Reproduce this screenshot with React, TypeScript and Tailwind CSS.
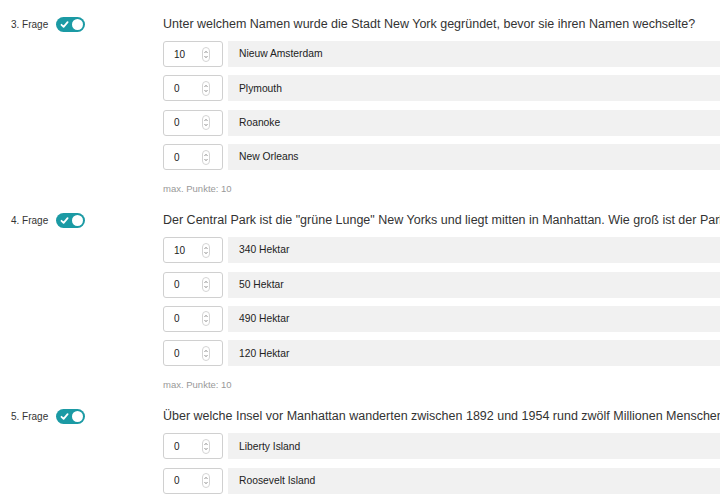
const questions = [
  {
    no: 3,
    text: 'Unter welchem Namen wurde die Stadt New York gegründet, bevor sie ihren Namen wechselte?',
    answers: [
      { points: 10, label: 'Nieuw Amsterdam' },
      { points: 0, label: 'Plymouth' },
      { points: 0, label: 'Roanoke' },
      { points: 0, label: 'New Orleans' },
    ],
  },
  {
    no: 4,
    text: 'Der Central Park ist die "grüne Lunge" New Yorks und liegt mitten in Manhattan. Wie groß ist der Park?',
    answers: [
      { points: 10, label: '340 Hektar' },
      { points: 0, label: '50 Hektar' },
      { points: 0, label: '490 Hektar' },
      { points: 0, label: '120 Hektar' },
    ],
  },
  {
    no: 5,
    text: 'Über welche Insel vor Manhattan wanderten zwischen 1892 und 1954 rund zwölf Millionen Menschen ein?',
    answers: [
      { points: 0, label: 'Liberty Island' },
      { points: 0, label: 'Roosevelt Island' },
    ],
  },
];

function Toggle() {
  return (
    <div className="relative w-[29px] h-[15px] rounded-full bg-[#1b9aa4]">
      <svg className="absolute left-[4px] top-[3px]" width="9" height="9" viewBox="0 0 9 9">
        <path d="M1.5 4.8 L3.6 6.8 L7.6 2.2" fill="none" stroke="white" strokeWidth="1.8" strokeLinecap="round" strokeLinejoin="round" />
      </svg>
      <div className="absolute right-[2px] top-[2px] w-[11px] h-[11px] rounded-full bg-white" />
    </div>
  );
}

function Spinner() {
  return (
    <svg width="8" height="15" viewBox="0 0 8 15">
      <rect x="0.5" y="0.5" width="7" height="14" rx="3.5" fill="white" stroke="#d4d4d4" />
      <path d="M2.5 6 L4 4.3 L5.5 6" fill="none" stroke="#888" strokeWidth="0.9" />
      <path d="M2.5 9 L4 10.7 L5.5 9" fill="none" stroke="#888" strokeWidth="0.9" />
    </svg>
  );
}

export default function App() {
  return (
    <div
      className="w-[720px] h-[500px] overflow-hidden bg-white text-[#333] pt-[14px]"
      style={{ fontFamily: '"Liberation Sans", Arial, sans-serif' }}
    >
      {questions.map((q) => (
        <div key={q.no} className="flex mb-[14px]">
          {/* Label + toggle */}
          <div className="w-[163px] shrink-0 pl-[11px]">
            <div className="h-[20px] flex items-center gap-[8px]">
              <span className="text-[10px] text-[#333]">{q.no}. Frage</span>
              <Toggle />
            </div>
          </div>

          {/* Question */}
          <div className="w-[640px] shrink-0">
            <div className="h-[20px] flex items-center text-[12.5px] whitespace-nowrap">{q.text}</div>
            <div className="mt-[7px] flex flex-col gap-[8.4px]">
              {q.answers.map((a) => (
                <div key={a.label} className="flex h-[26px] gap-[5px]">
                  <div className="w-[60px] shrink-0 flex items-center justify-between pl-[10px] pr-[12px] border border-[#d0d0d0] rounded-[3px] bg-white">
                    <span className="text-[10px] text-[#222]">{a.points}</span>
                    <Spinner />
                  </div>
                  <div className="flex-1 flex items-center pl-[11px] bg-[#f1f1f1] text-[10.3px] text-[#222]">
                    {a.label}
                  </div>
                </div>
              ))}
            </div>
            <div className="mt-[12px] h-[14px] flex items-center text-[9.5px] text-[#999]">max. Punkte: 10</div>
          </div>
        </div>
      ))}
    </div>
  );
}
